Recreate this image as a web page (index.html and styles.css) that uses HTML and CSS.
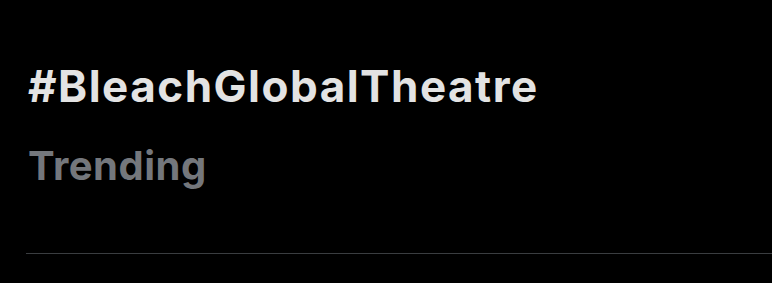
FILE: index.html
```html
<!DOCTYPE html>
<html>
<head>
<meta charset="utf-8">
<link rel="stylesheet" href="styles.css">
</head>
<body>
<div class="trend">
  <div class="title">#BleachGlobalTheatre</div>
  <div class="meta">Trending</div>
</div>
</body>
</html>
```
FILE: styles.css
```css
html, body {
  margin: 0;
  padding: 0;
  background: #000;
  width: 772px;
  height: 283px;
  overflow: hidden;
}
.trend {
  margin-left: 26px;
  padding-top: 60px;
  padding-left: 2px;
  height: 193px;
  border-bottom: 1px solid #3a3d40;
  box-sizing: content-box;
}
.title {
  font-family: Inter, "Liberation Sans", sans-serif;
  font-weight: 700;
  font-size: 44px;
  line-height: 52px;
  letter-spacing: 1.5px;
  color: #e3e3e3;
}
.meta {
  margin-top: 32px;
  font-family: Inter, "Liberation Sans", sans-serif;
  font-weight: 700;
  font-size: 40px;
  line-height: 44px;
  letter-spacing: 0.5px;
  color: #74777c;
}
```
